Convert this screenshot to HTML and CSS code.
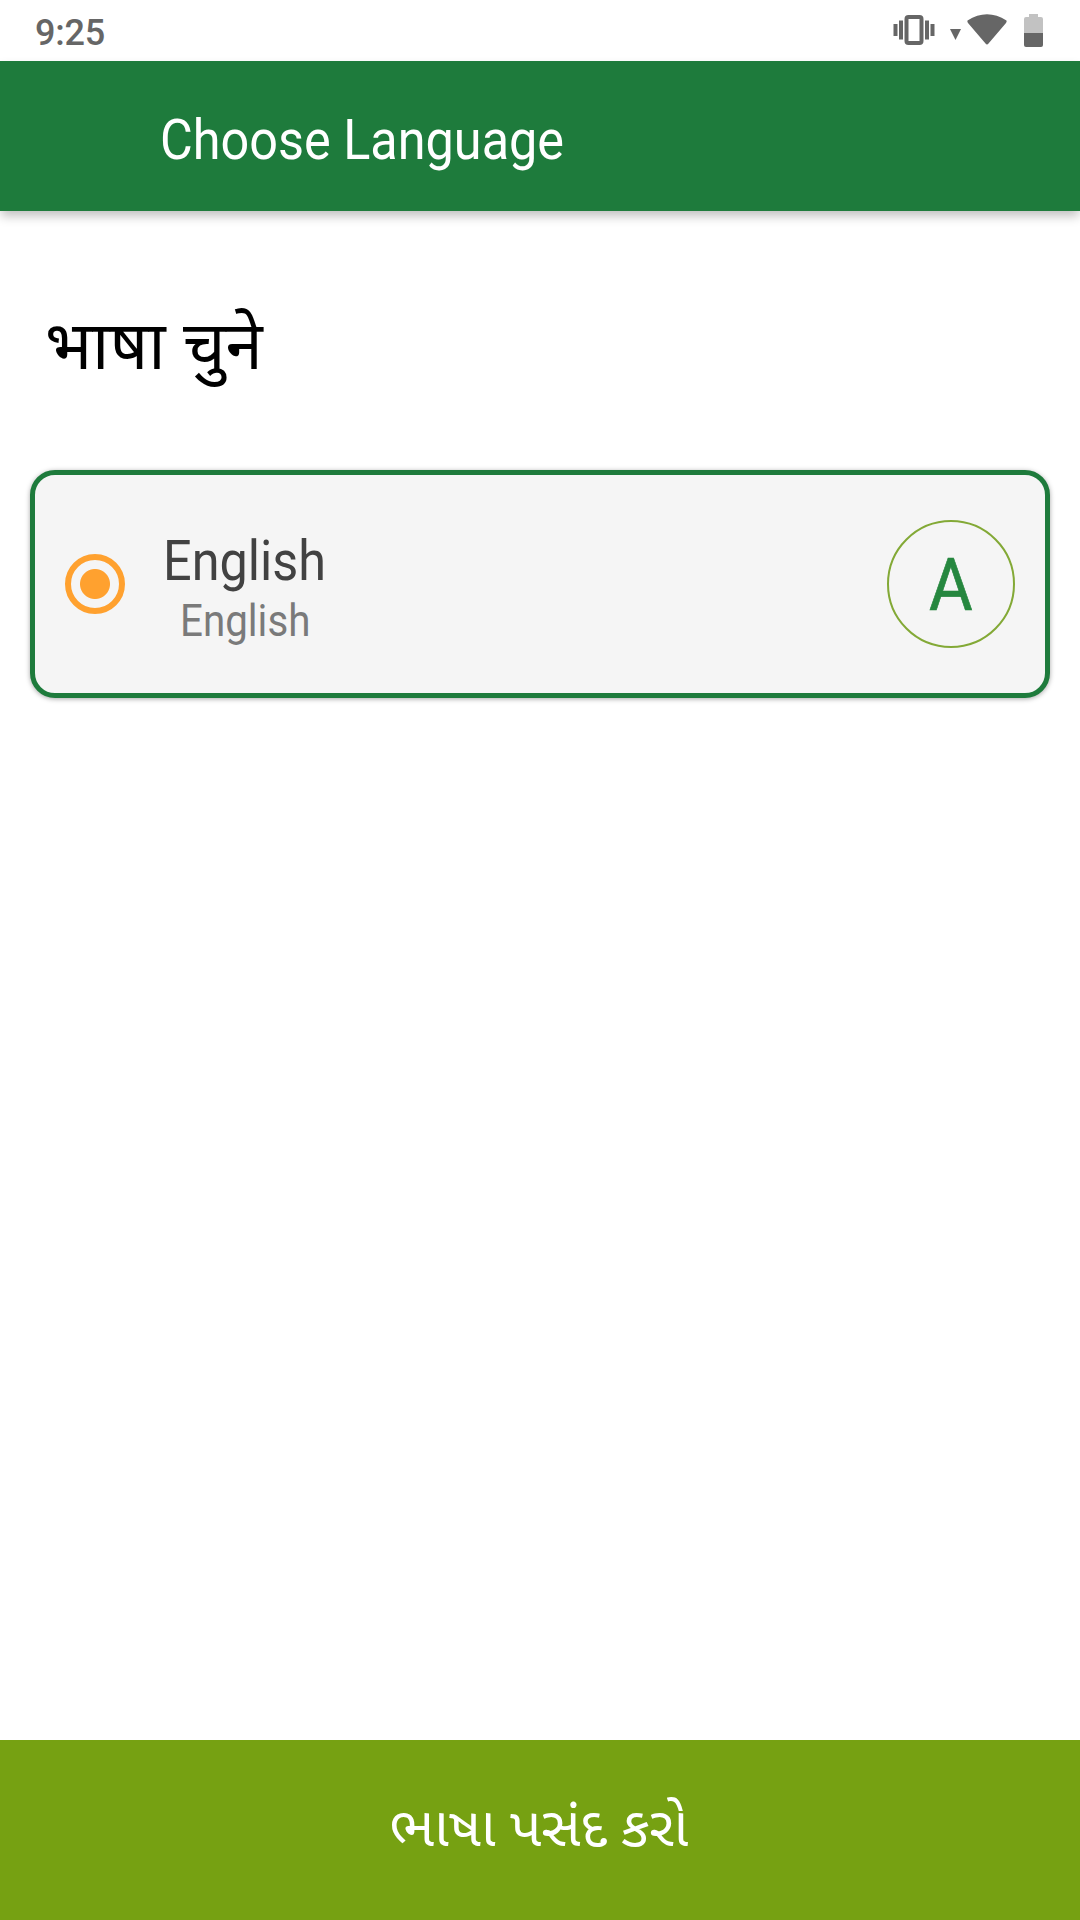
FILE: index.html
```html
<!DOCTYPE html>
<html lang="en">
<head>
    <meta charset="UTF-8">
    <meta name="viewport" content="width=device-width, initial-scale=1.0">
    <title>Choose Language</title>
    <link rel="stylesheet" href="styles.css">
</head>
<body>
    <div class="status-bar">
        <span class="time">9:25</span>
        <svg class="status-icons" width="160" height="60" viewBox="0 0 160 60" fill="#666">
            <!-- vibrate -->
            <rect x="6.500" y="17" width="15" height="26" rx="2" fill="none" stroke="#666" stroke-width="4"/>
            <path d="M-6.500 24h4v12h-4zM-1 20.500h4v19h-4zM25 20.500h4v19h-4zM30.500 24h4v12h-4z"/>
            <!-- wifi -->
            <path d="M50 29h11l-5.500 11z"/>
            <path d="M67.500 20.500Q87 8 106.500 20.500Q107 21.500 106 23L88.500 43.500Q87 45.500 85.500 43.500L68 23Q67 21.500 67.500 20.500Z"/>
            <!-- battery -->
            <path d="M124 33V19q0-2 2-2h3v-3h9v3h3q2 0 2 2v14z" fill="#c2c2c2"/>
            <path d="M124 33h19v12q0 2-2 2h-15q-2 0-2-2z"/>
        </svg>
    </div>
    <header class="app-bar">
        <h1 class="title"><span>Choose Language</span></h1>
    </header>
    <main class="content">
        <h2 class="heading" lang="hi">भाषा चुने</h2>
        <div class="language-card">
            <span class="radio"></span>
            <div class="names">
                <span class="name">English</span>
                <span class="native-name">English</span>
            </div>
            <div class="letter"><span>A</span></div>
        </div>
    </main>
    <button class="submit" lang="gu">ભાષા પસંદ કરો</button>
</body>
</html>
```
FILE: styles.css
```css
* {
    box-sizing: border-box;
}
body {
    margin: 0;
    height: 1920px;
    display: flex;
    flex-direction: column;
    overflow: hidden;
    background-color: #fff;
    font-family: Roboto, "Noto Sans", sans-serif;
}
.status-bar {
    height: 61px;
    display: flex;
    justify-content: space-between;
    padding: 0 20px 0 35px;
}
.time {
    font-size: 36px;
    line-height: 67px;
    font-weight: 500;
    letter-spacing: -0.200px;
    color: #666;
}
.status-icons {
    overflow: visible;
}
.app-bar {
    height: 150px;
    padding-left: 160px;
    background-color: #1e7b3c;
    box-shadow: 0 6px 10px -1px rgba(0,0,0,0.25);
}
.title {
    margin: 0;
    font-size: 55px;
    line-height: 159px;
    font-weight: 400;
    color: #fff;
}
.title span,
.name,
.native-name,
.letter span {
    display: inline-block;
    transform: scaleX(0.916);
    transform-origin: left center;
}
.content {
    flex: 1;
    padding: 76px 30px 0;
}
.heading {
    margin: 0 0 63px;
    padding-left: 15px;
    height: 120px;
    font-family: "Noto Sans Devanagari", "Noto Sans", sans-serif;
    font-size: 67px;
    line-height: 132px;
    font-weight: 400;
    color: #000;
}
.language-card {
    height: 228px;
    display: flex;
    align-items: center;
    padding: 0 30px;
    border: 5px solid #1e7b3c;
    border-radius: 25px;
    background-color: #f5f5f5;
    box-shadow: 0 1px 5px rgba(0,0,0,0.35);
}
.radio {
    width: 60px;
    height: 60px;
    border: 6px solid #ffa12f;
    border-radius: 50%;
    background: radial-gradient(circle, #ffa12f 14.500px, transparent 15.500px);
}
.names {
    flex: 1;
    display: flex;
    flex-direction: column;
    align-items: flex-start;
    padding: 10px 0 0 38px;
}
.name {
    font-size: 55px;
    line-height: 64px;
    color: #424242;
}
.native-name {
    margin-left: 17px;
    font-size: 44px;
    line-height: 56px;
    color: #7a7a7a;
}
.letter {
    width: 128px;
    height: 128px;
    display: flex;
    align-items: center;
    justify-content: center;
    padding-top: 2px;
    border: 2px solid #83a936;
    border-radius: 50%;
    font-size: 73px;
    font-weight: 400;
    color: #26873f;
}
.letter span {
    transform-origin: center;
    -webkit-text-stroke: 0.700px #26873f;
}
.submit {
    height: 180px;
    padding: 5px 8px 0 6px;
    border: 0;
    background-color: #76a112;
    color: #fff;
    font-family: "Noto Sans Gujarati", "Noto Sans", sans-serif;
    font-size: 55.300px;
}
```
